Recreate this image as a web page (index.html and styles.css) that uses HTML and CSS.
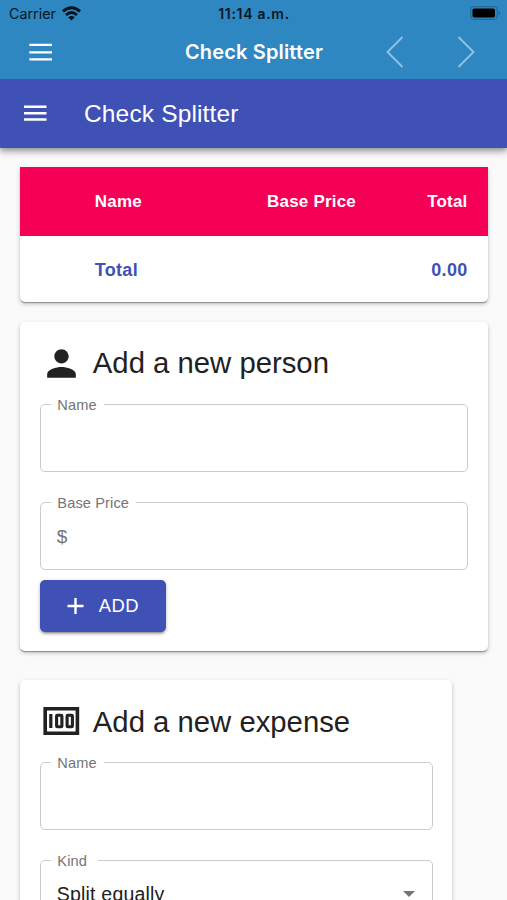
FILE: index.html
```html
<!DOCTYPE html>
<html lang="en">
<head>
<meta charset="utf-8">
<title>Check Splitter</title>
<link rel="stylesheet" href="styles.css">
</head>
<body>
<header class="native">
  <div class="status">
    <div class="carrier"><span>Carrier</span>
      <svg width="19" height="15" viewBox="0 0 19 15"><g fill="none" stroke="#04121c" stroke-width="2.900"><path d="M1 5.400Q9.500 -2.100 18 5.400"/><path d="M4 9Q9.500 4.200 15 9"/></g><path d="M6.200 11.200Q9.500 8.600 12.800 11.200L9.500 14.400Z" fill="#04121c"/></svg>
    </div>
    <span class="clock">11:14 a.m.</span>
    <svg class="battery" width="31" height="14" viewBox="0 0 31 14"><rect x=".7" y=".7" width="26.600" height="12.600" rx="3.500" fill="none" stroke="#236a98" stroke-width="1.200"/><rect x="2.500" y="2.500" width="22.500" height="9" rx="1.800" fill="#000"/><path d="M28.500 4.800Q30.500 5.500 30.500 7T28.500 9.200Z" fill="#236a98"/></svg>
  </div>
  <div class="nav">
    <svg class="menu" width="23" height="18" viewBox="0 0 23 18"><path d="M.3 1.800h22.700M.3 9.300h22.700M.3 16.300h22.700" stroke="#fff" stroke-width="2.300"/></svg>
    <span class="nav-title">Check Splitter</span>
    <div class="arrows">
      <svg width="18" height="32" viewBox="0 0 18 32"><path d="M16.500 1L1.500 16l15 15" fill="none" stroke="#8dc0e4" stroke-width="2"/></svg>
      <svg width="18" height="32" viewBox="0 0 18 32"><path d="M1.500 1l15 15-15 15" fill="none" stroke="#8dc0e4" stroke-width="2"/></svg>
    </div>
  </div>
</header>
<div class="appbar">
  <svg width="24" height="18" viewBox="0 0 24 18"><path d="M1 2.700h22.500M1 9.200h22.500M1 15.500h22.500" stroke="#fff" stroke-width="2.400"/></svg>
  <h1>Check Splitter</h1>
</div>
<main>
  <section class="card summary">
    <div class="row head"><span class="name">Name</span><span class="base">Base Price</span><span class="total">Total</span></div>
    <div class="row sum"><span class="name">Total</span><span class="base"></span><span class="total">0.00</span></div>
  </section>
  <section class="card person">
    <h2><svg width="43" height="43" viewBox="0 0 24 24"><path fill="#212121" d="M12 12c2.210 0 4-1.790 4-4s-1.790-4-4-4-4 1.790-4 4 1.790 4 4 4zm0 2c-2.670 0-8 1.340-8 4v2h16v-2c0-2.660-5.330-4-8-4z"/></svg><span>Add a new person</span></h2>
    <div class="field"><span class="label">Name</span></div>
    <div class="field"><span class="label price">Base Price</span><span class="dollar">$</span></div>
    <button class="add"><svg width="18" height="18" viewBox="0 0 18 18"><path d="M8.500 1v16M.5 9h16" stroke="#fff" stroke-width="2.400"/></svg><span>ADD</span></button>
  </section>
  <section class="card expense">
    <h2><svg width="43" height="43" viewBox="0 0 43 43"><g fill="none" stroke="#212121"><path d="M5.200 8.700h32.200v24.600H5.200z" stroke-width="3.600"/><path d="M10.800 14v14" stroke-width="3.200"/><rect x="16.600" y="15.300" width="5.300" height="11.500" rx=".8" stroke-width="3.100"/><rect x="27.100" y="15.300" width="5.300" height="11.500" rx=".8" stroke-width="3.100"/></g></svg><span>Add a new expense</span></h2>
    <div class="field"><span class="label">Name</span></div>
    <div class="field select"><span class="label kind">Kind</span><span class="value">Split equally</span><svg class="caret" width="12" height="6" viewBox="0 0 12 6"><path d="M0 0h12L6 6z" fill="#757575"/></svg></div>
  </section>
</main>
</body>
</html>
```
FILE: styles.css
```css
* { box-sizing: border-box; }
html, body { height: 900px; overflow: hidden; }
body { margin: 0; background: #fafafa; color: #212121; font-family: "Liberation Sans", Arial, sans-serif; display: flex; flex-direction: column; }
svg { display: block; flex: none; }
.native { height: 79px; flex: none; position: relative; z-index: 1; background: #2e87c0; font-family: Inter, sans-serif; }
.status { height: 27px; display: grid; grid-template-columns: 1fr auto 1fr; align-items: center; padding: 0 6px 0 9px; color: #071722; font-size: 14.300px; }
.carrier { display: flex; align-items: center; gap: 6px; }
.carrier svg { margin-top: -1px; }
.clock { font-weight: 600; font-size: 14px; letter-spacing: .7px; margin-left: -2px; }
.battery { justify-self: end; margin-top: -1px; }
.nav { height: 50px; display: grid; grid-template-columns: 1fr auto 1fr; align-items: center; padding: 0 32px 0 29px; }
.nav-title { color: #fff; font-size: 20px; font-weight: 600; letter-spacing: .15px; margin-left: 4px; }
.arrows { display: flex; justify-content: flex-end; gap: 53px; }
.appbar { height: 68.500px; flex: none; position: relative; background: #3f51b5; color: #fff; display: flex; align-items: center; gap: 37px; padding-left: 23px; box-shadow: 0 2px 5px rgba(0,0,0,.25), 0 5px 6px rgba(0,0,0,.14), 0 1px 12px rgba(0,0,0,.12); }
h1, h2 { margin: 0; font-weight: 400; white-space: nowrap; }
h1 { font-size: 24.500px; letter-spacing: .15px; padding-top: 1px; }
main { padding: 19.500px 19.500px 0 20.300px; }
.card { background: #fff; border-radius: 5px; box-shadow: 0 2px 1px -1px rgba(0,0,0,.2), 0 1px 1px rgba(0,0,0,.14), 0 2px 4px rgba(0,0,0,.24); }
.summary { height: 135px; overflow: hidden; border-radius: 0 0 5px 5px; }
.row { display: grid; grid-template-columns: 1fr 1fr 111.500px; padding: 2px 20px 0 74.500px; align-items: center; font-weight: 700; }
.head { height: 68.500px; background: #f50057; color: #fff; font-size: 17px; letter-spacing: .2px; }
.sum { height: 66.500px; padding-top: 3px; color: #3f51b5; font-size: 18px; letter-spacing: .3px; }
.base, .total { text-align: right; }
.person { height: 329px; margin-top: 20px; padding: 20px 19.500px; }
h2 { display: flex; align-items: center; gap: 10px; height: 43px; font-size: 29.300px; }
h2 span { margin-top: -2px; }
.expense h2 span { margin-top: 0; }
.field { height: 68px; margin-top: 19px; position: relative; border: 1.500px solid #cbcbcb; border-radius: 5px; padding: 0 16px; display: flex; align-items: center; font-size: 19px; }
.field + .field { margin-top: 30px; }
.label { position: absolute; left: 10.500px; top: -9.500px; width: 52.500px; padding-left: 6px; background: #fff; color: #757575; font-size: 14.600px; line-height: 19px; letter-spacing: .12px; white-space: nowrap; }
.label.price { width: 85px; }
.label.kind { width: 47px; }
.dollar { color: #757575; padding-top: 1px; }
.add { margin-top: 10px; width: 126px; height: 51.500px; padding: 0 0 0 27px; display: flex; align-items: center; gap: 14px; border: 0; border-radius: 5px; background: #3f51b5; color: #fff; font-family: inherit; font-size: 18.400px; letter-spacing: .5px; box-shadow: 0 3px 2px -2px rgba(0,0,0,.25), 0 2px 3px rgba(0,0,0,.2), 0 1px 5px rgba(0,0,0,.12); }
.expense { width: 432px; height: 500px; margin-top: 29.100px; padding: 20px 19.500px; }
.select { justify-content: space-between; padding-right: 17px; }
.value { font-size: 19.500px; letter-spacing: .2px; padding-top: 1px; }
```
